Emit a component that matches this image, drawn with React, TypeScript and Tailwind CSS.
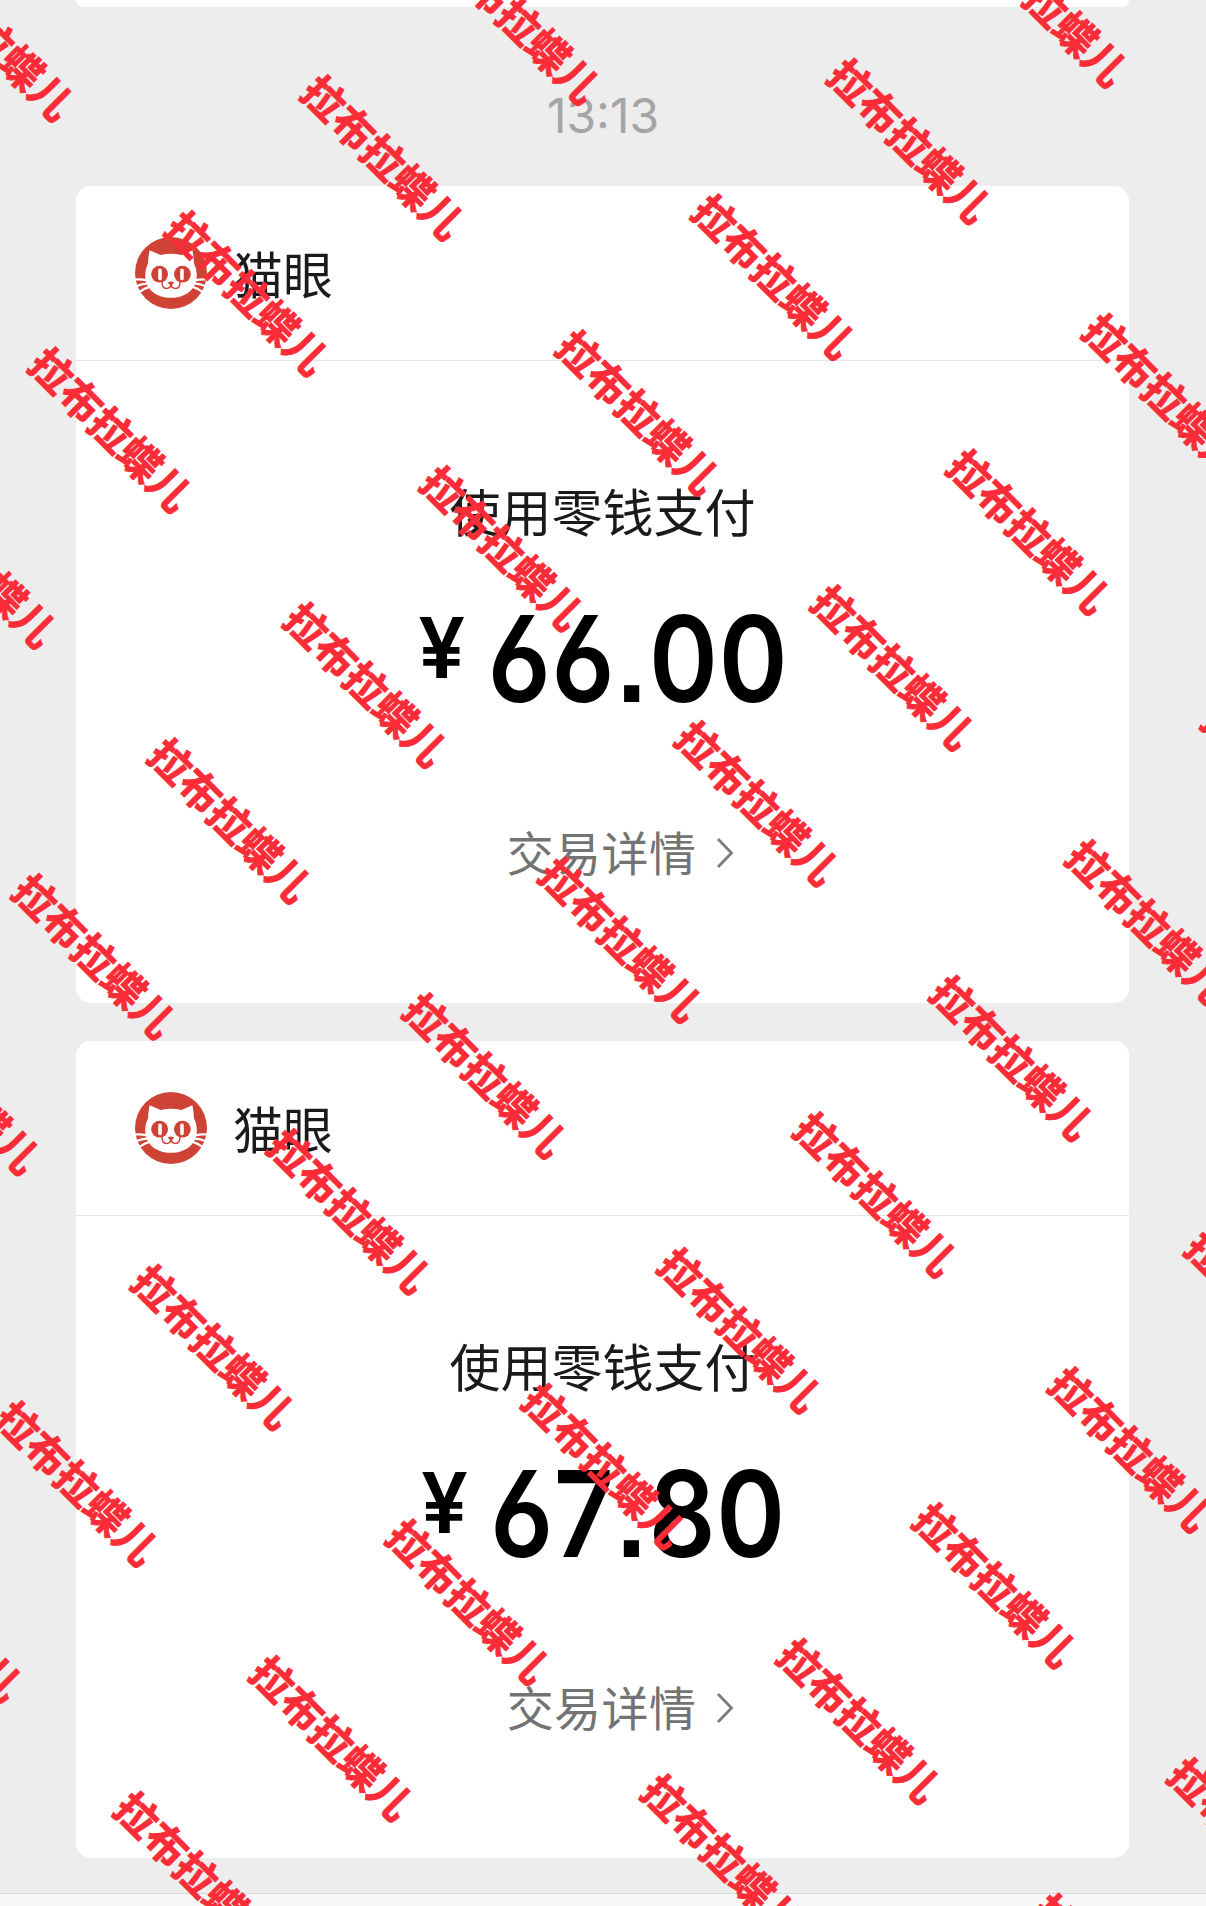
import React from 'react';

const payments = [
  { id: 1, merchant: '猫眼', method: '使用零钱支付', amount: '66.00' },
  { id: 2, merchant: '猫眼', method: '使用零钱支付', amount: '67.80' },
];

const WATERMARK = '拉布拉蝶儿';
const WATERMARK_COUNT = 7 * 13;

function CatLogo() {
  return (
    <svg viewBox="0 0 72 72" className="h-[72px] w-[72px] shrink-0">
      <circle cx="36" cy="36" r="36" fill="#cf4337" />
      {/* whiskers */}
      <g stroke="#fff" strokeWidth="2.2" fill="none">
        <path d="M-1 42.6Q6 41.8 12 43.4M0 49.6Q7 46.6 13 46.4M3 56Q8 51.6 15 49.6" />
        <path d="M73 42.6Q66 41.8 60 43.4M72 49.6Q65 46.6 59 46.4M69 56Q64 51.6 57 49.6" />
      </g>
      {/* head */}
      <path
        d="M14.6 13.2L25.6 18Q36 15.6 46.4 18L57.4 13.2Q58.8 20 59 26.4Q62 32 61.8 39C61.6 52 51 60.8 36 60.8S10.4 52 10.2 39Q10 32 13 26.4Q13.2 20 14.6 13.2Z"
        fill="#fff"
      />
      <circle cx="24.6" cy="37.2" r="8.4" fill="#cf4337" />
      <circle cx="47.4" cy="37.2" r="8.4" fill="#cf4337" />
      <rect x="23.2" y="31.4" width="3.6" height="11.8" rx="1.6" fill="#fff" />
      <rect x="45.2" y="31.4" width="3.6" height="11.8" rx="1.6" fill="#fff" />
      <path d="M33 45.2Q36 43.6 39 45.2Q38.6 47.6 36 48.6Q33.4 47.6 33 45.2Z" fill="#cf4337" />
      <path d="M27 44Q26.6 51.4 31.4 51.4Q35.4 51.4 36 47.4Q36.6 51.4 40.6 51.4Q45.4 51.4 45 44" fill="none" stroke="#cf4337" strokeWidth="1.5" />
    </svg>
  );
}

function PaymentCard({ merchant, method, amount }: { merchant: string; method: string; amount: string }) {
  return (
    <div className="h-[817px] rounded-[15px] bg-white">
      <div className="flex h-[175px] items-center gap-[26px] border-b border-[#e5e5e5] pl-[59px]">
        <CatLogo />
        <span className="pb-[3px] text-[50px] leading-[60px] text-[#1a1a1a]">{merchant}</span>
      </div>
      <div className="flex flex-col items-center">
        <p className="mt-[113px] text-[51px] leading-[72px] text-[#1a1a1a]">{method}</p>
        <div className="mt-[53px] flex h-[120px] w-[440px] scale-x-[0.87] items-start justify-center pl-[4px] font-[Inter,sans-serif] font-semibold text-black [font-kerning:none] [font-feature-settings:'cv03','cv04','ss07']">
          <span className="mr-[29px] mt-[7px] scale-x-[1.14] text-[84px] leading-[84px]">¥</span>
          <span className="text-[120px] leading-[120px] tracking-[0.8px]">{amount}</span>
        </div>
        <div className="mt-[99px] flex items-center gap-[20px] pl-[36px] text-[#737373]">
          <span className="text-[47px] leading-[66px] tracking-[0.4px]">交易详情</span>
          <svg viewBox="0 0 18 32" className="mt-[3px] h-[32px] w-[18px]">
            <path d="M2 2L15.5 16L2 30" fill="none" stroke="#7c7c7c" strokeWidth="2.8" />
          </svg>
        </div>
      </div>
    </div>
  );
}

function Watermarks() {
  return (
    <div className="pointer-events-none absolute inset-0 overflow-hidden">
      <div className="absolute left-[613.5px] top-[-838px] grid w-[2523.5px] origin-top-left rotate-45 grid-cols-7 auto-rows-[192.25px] place-items-center text-[41.8px] leading-[42px] font-bold text-[#fa2c37] [-webkit-text-stroke:0.9px_#fa2c37]">
        {[...Array(WATERMARK_COUNT)].map((_, i) => (
          <span key={i} className="whitespace-nowrap">{WATERMARK}</span>
        ))}
      </div>
    </div>
  );
}

export default function App() {
  return (
    <div className="relative flex h-[1906px] w-[1206px] flex-col overflow-hidden bg-[#ededed] font-['Noto_Sans_CJK_SC',sans-serif]">
      <div className="mx-[76px] h-[7px] w-[1053px] shrink-0 rounded-b-[15px] bg-white" />
      <div className="flex h-[179px] shrink-0 items-center justify-center pt-[39px] font-[Inter,sans-serif] text-[48px] font-normal text-[#a5a5a5]">
        13:13
      </div>
      <div className="mx-[76px] flex w-[1053px] flex-col gap-[38px]">
        {payments.map((payment) => (
          <PaymentCard key={payment.id} merchant={payment.merchant} method={payment.method} amount={payment.amount} />
        ))}
      </div>
      <div className="mt-auto h-[13px] shrink-0 border-t border-[#dadada] bg-[#f7f7f7]" />
      <Watermarks />
    </div>
  );
}
